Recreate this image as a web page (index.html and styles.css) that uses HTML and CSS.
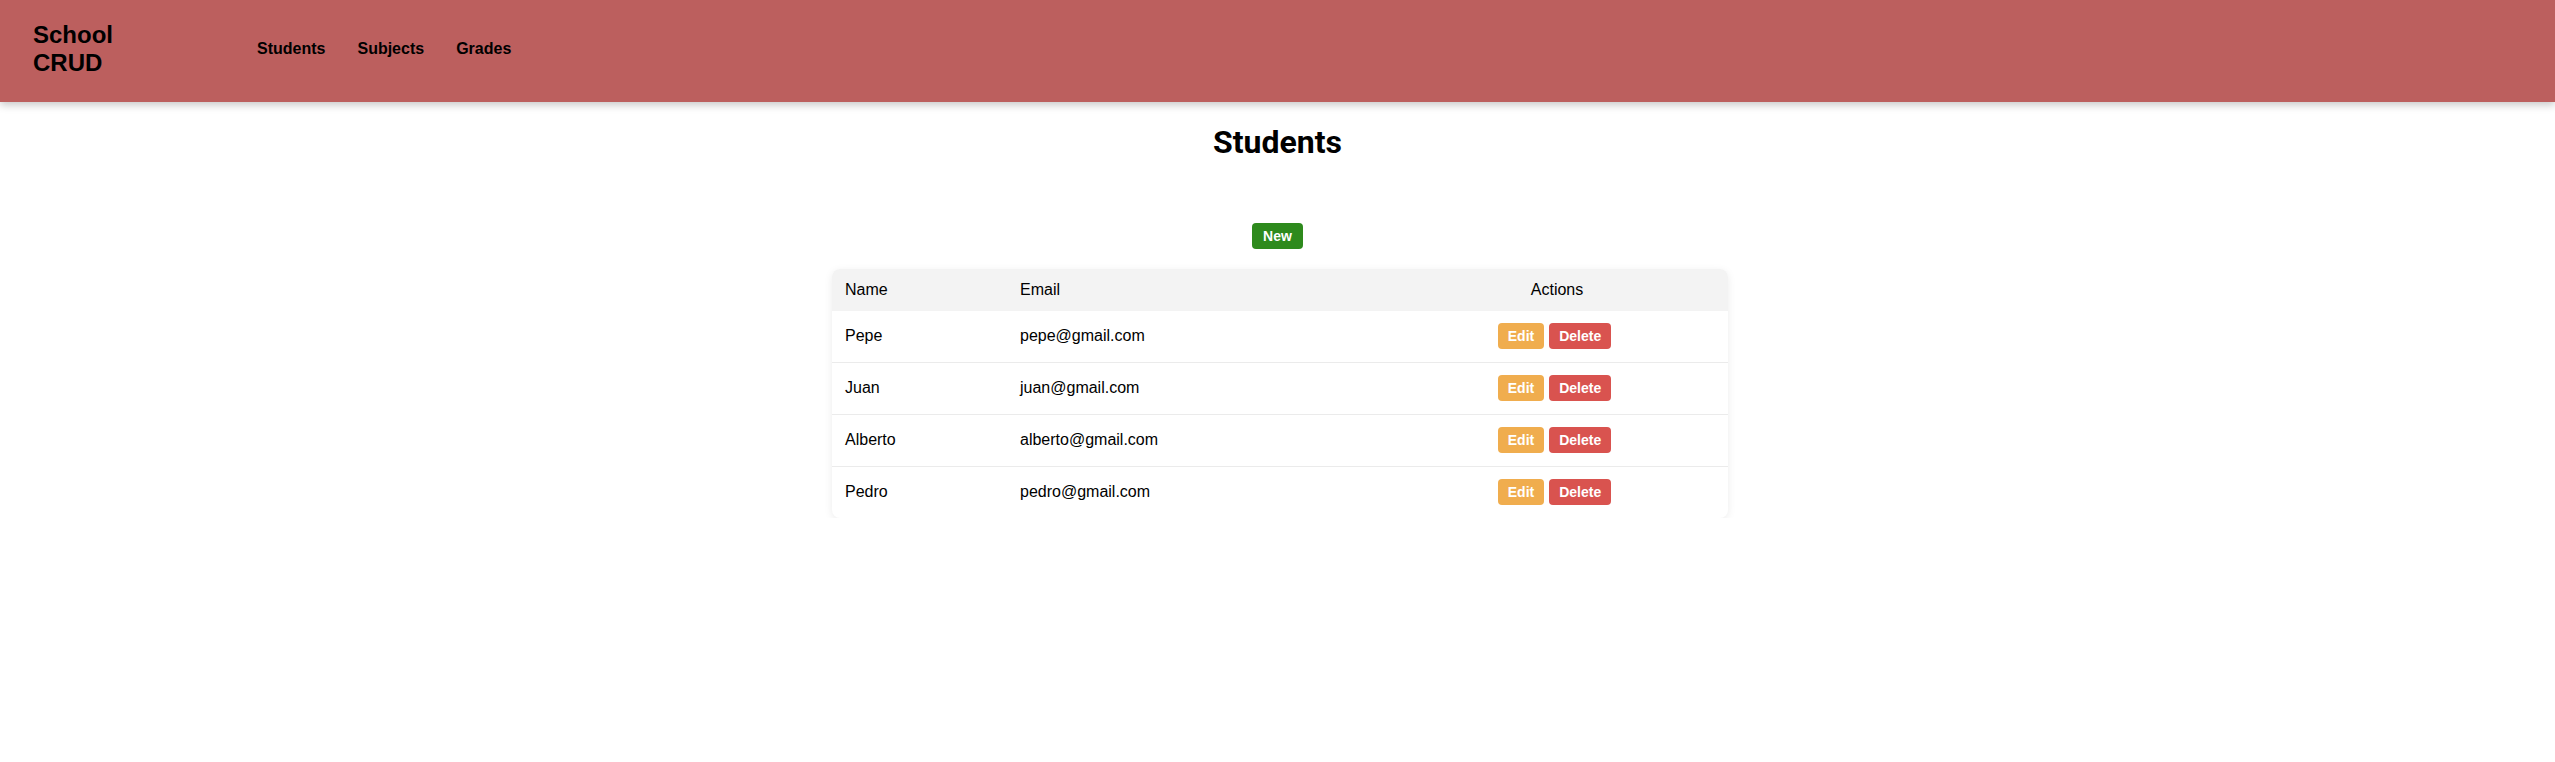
FILE: index.html
```html
<!DOCTYPE html>
<html lang="en">
<head>
<meta charset="utf-8">
<title>School CRUD</title>
<link rel="stylesheet" href="styles.css">
</head>
<body>
<header class="topbar">
  <div class="brand">School CRUD</div>
  <nav class="nav">
    <a class="nav-link" href="#">Students</a>
    <a class="nav-link" href="#">Subjects</a>
    <a class="nav-link" href="#">Grades</a>
  </nav>
</header>
<main class="content">
  <h1 class="page-title">Students</h1>
  <div class="toolbar">
    <button class="btn btn-new">New</button>
  </div>
  <div class="table-card">
    <table class="data-table">
      <colgroup>
        <col class="col-name">
        <col class="col-email">
        <col class="col-actions">
      </colgroup>
      <thead>
        <tr>
          <th>Name</th>
          <th>Email</th>
          <th class="center">Actions</th>
        </tr>
      </thead>
      <tbody>
        <tr>
          <td>Pepe</td>
          <td>pepe@gmail.com</td>
          <td><div class="actions"><button class="btn btn-edit">Edit</button><button class="btn btn-delete">Delete</button></div></td>
        </tr>
        <tr>
          <td>Juan</td>
          <td>juan@gmail.com</td>
          <td><div class="actions"><button class="btn btn-edit">Edit</button><button class="btn btn-delete">Delete</button></div></td>
        </tr>
        <tr>
          <td>Alberto</td>
          <td>alberto@gmail.com</td>
          <td><div class="actions"><button class="btn btn-edit">Edit</button><button class="btn btn-delete">Delete</button></div></td>
        </tr>
        <tr>
          <td>Pedro</td>
          <td>pedro@gmail.com</td>
          <td><div class="actions"><button class="btn btn-edit">Edit</button><button class="btn btn-delete">Delete</button></div></td>
        </tr>
      </tbody>
    </table>
  </div>
</main>
</body>
</html>
```

FILE: styles.css
```css
* {
  box-sizing: border-box;
}

body {
  margin: 0;
  font-family: "Liberation Sans", Arial, sans-serif;
  color: #000;
  background: #fff;
}

.topbar {
  display: flex;
  align-items: center;
  height: 102px;
  padding: 0 0 5px 33px;
  background: #bc5f5e;
  box-shadow: 0 3px 8px rgba(0, 0, 0, 0.22);
  position: relative;
  z-index: 1;
}

.brand {
  width: 100px;
  font-size: 24px;
  font-weight: bold;
  line-height: normal;
}

.nav {
  display: flex;
  gap: 32px;
  margin-left: 124px;
}

.nav-link {
  color: #000;
  text-decoration: none;
  font-size: 16px;
  font-weight: bold;
}

.content {
  display: flex;
  flex-direction: column;
  align-items: center;
}

.page-title {
  margin: 21.44px 0;
  font-family: Roboto, "Liberation Sans", sans-serif;
  font-size: 32px;
  font-weight: bold;
}

.toolbar {
  margin: 40px 0 20px;
}

.btn {
  border: none;
  border-radius: 4px;
  padding: 5px 10px;
  font-family: "Liberation Sans", Arial, sans-serif;
  font-size: 14px;
  font-weight: bold;
  line-height: 16px;
  color: #fff;
  cursor: pointer;
}

.btn-new {
  background: #2e8a1d;
  padding: 5px 11px;
}

.btn-edit {
  background: #f0ad4e;
}

.btn-delete {
  background: #d9534f;
}

.table-card {
  width: 896px;
  margin-left: 5px;
  border-radius: 8px;
  overflow: hidden;
  box-shadow: 0 2px 8px rgba(0, 0, 0, 0.08);
  background: #fff;
}

.data-table {
  width: 100%;
  border-collapse: collapse;
  table-layout: fixed;
  font-size: 16px;
}

.col-name {
  width: 175px;
}

.col-email {
  width: 379px;
}

.col-actions {
  width: 342px;
}

.data-table th {
  background: #f3f3f3;
  font-weight: normal;
  text-align: left;
  padding: 12px 13px;
}

.data-table th.center {
  text-align: center;
}

.data-table td {
  padding: 12.5px 13px;
  border-top: 1px solid #ebebeb;
}

.data-table tbody tr:first-child td {
  border-top: none;
}

.actions {
  display: flex;
  justify-content: center;
  gap: 5px;
  margin-left: -5px;
}
```
